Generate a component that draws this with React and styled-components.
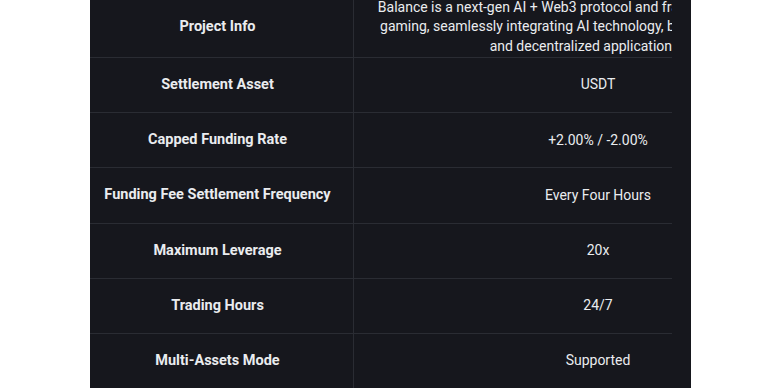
import React from 'react';
import styled, { createGlobalStyle } from 'styled-components';

const GlobalStyle = createGlobalStyle`
  html, body {
    margin: 0;
    padding: 0;
    background: #ffffff;
    overflow: hidden;
  }
  body {
    font-family: Roboto, "Noto Sans", "Liberation Sans", sans-serif;
  }
  * {
    box-sizing: border-box;
  }
`;

const Page = styled.div`
  height: 388px;
  overflow: hidden;
`;

const Panel = styled.div`
  margin: -3px 0 0 90px;
  width: 601px;
  padding-right: 19px;
  height: 400px;
  background: #16171d;
`;

const Clip = styled.div`
  width: 582px;
  overflow: hidden;
`;

const Table = styled.div`
  width: 752px;
  display: flex;
  flex-direction: column;
`;

const Row = styled.div`
  display: grid;
  grid-template-columns: 263px 489px;
  height: ${p => (p.$tall ? 61 : 55.2)}px;
  border-bottom: 1px solid #2a2c33;
`;

const Label = styled.div`
  display: flex;
  align-items: center;
  justify-content: center;
  padding-right: 8px;
  text-align: center;
  font-size: 14.5px;
  font-weight: 700;
  color: #eaecef;
  line-height: 20px;
`;

const Value = styled.div`
  display: flex;
  align-items: center;
  justify-content: center;
  text-align: center;
  border-left: 1px solid #2a2c33;
  font-size: 14px;
  font-weight: 400;
  color: #eaecef;
  line-height: 19.5px;
  white-space: pre-line;
`;

const rows = [
  {
    label: 'Project Info',
    value:
      'Balance is a next-gen AI + Web3 protocol and framework for immersive\ngaming, seamlessly integrating AI technology, blockchain ecosystems,\nand decentralized applications into',
    tall: true,
  },
  { label: 'Settlement Asset', value: 'USDT' },
  { label: 'Capped Funding Rate', value: '+2.00% / -2.00%' },
  { label: 'Funding Fee Settlement Frequency', value: 'Every Four Hours' },
  { label: 'Maximum Leverage', value: '20x' },
  { label: 'Trading Hours', value: '24/7' },
  { label: 'Multi-Assets Mode', value: 'Supported' },
];

const App = () => (
  <Page>
    <GlobalStyle />
    <Panel>
      <Clip>
        <Table>
          {rows.map(r => (
            <Row key={r.label} $tall={r.tall}>
              <Label>{r.label}</Label>
              <Value>{r.value}</Value>
            </Row>
          ))}
        </Table>
      </Clip>
    </Panel>
  </Page>
);

export default App;
